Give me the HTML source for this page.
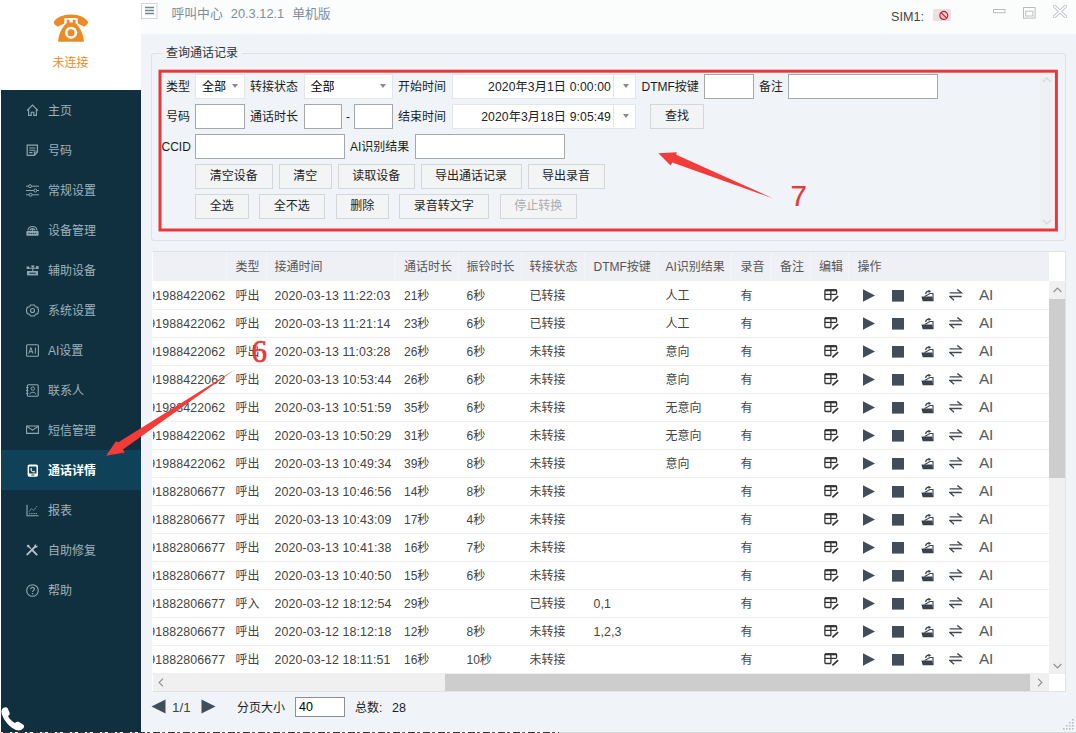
<!DOCTYPE html>
<html lang="zh-CN">
<head>
<meta charset="utf-8">
<title>呼叫中心</title>
<style>
*{box-sizing:border-box;margin:0;padding:0}
html,body{width:1076px;height:733px;overflow:hidden;background:#fff}
body{position:relative;font-family:"Liberation Sans","Noto Sans CJK SC",sans-serif;font-size:12px;color:#222;line-height:1}
.abs{position:absolute}
#logo{position:absolute;left:0;top:0;width:141px;height:90px;background:#fff}
#logo .t{position:absolute;left:0;width:141px;top:56px;text-align:center;color:#e98b2d;font-size:12px;line-height:14px}
#side{position:absolute;left:1px;top:90px;width:139.500px;height:641.500px;background:#11303f}
.si{position:absolute;left:0;width:139.500px;height:40px;color:#9db3be;font-size:12px}
.si svg{position:absolute;left:24.500px;top:13.700px}
.si span{position:absolute;left:47px;top:12.600px;line-height:16px;white-space:nowrap}
.si.sel{background:#0f4259;color:#fff;font-weight:bold}
#titlebar{position:absolute;left:141px;top:0;width:935px;height:34px;background:#fbfcfc}
#main{position:absolute;left:140.500px;top:34px;width:935.500px;height:697.500px;background:#f0f4f8}
#bottom{position:absolute;left:0;top:731.500px;width:1076px;height:1.500px;background:#fff;border-top:1px solid #d9dadb}
.lb{position:absolute;white-space:nowrap;line-height:16px;font-size:12px;color:#1c1c1c}
.inp{position:absolute;background:#fff;border:1px solid #a5a8ab;height:24.5px}
.cmb{position:absolute;background:#fff;border:1px solid #e3e5e7;height:24.200px;margin-top:-.2px}
.cmb span{position:absolute;left:6px;top:4px;line-height:16px;color:#000}
.cmb i{position:absolute;right:5.800px;top:9px;width:0;height:0;border-left:3.400px solid transparent;border-right:3.400px solid transparent;border-top:4.200px solid #8a8a8a}
.btn{position:absolute;height:24.500px;margin-top:-.5px;background:#f3f4f5;border:1px solid #d4d6d8;text-align:center;line-height:23.600px;font-size:12px;color:#222;white-space:nowrap}
.btn.dis{color:#a9abad}
#tbl{position:absolute;left:151.500px;top:251px;width:914px;height:440.500px;border:1px solid #dfe2e6;border-left-color:#fdfdfe;background:#fff;overflow:hidden}
#thead{position:absolute;left:0;top:0;width:896px;height:29.400px;background:#eff0f5}
.th{position:absolute;top:7px;line-height:16px;color:#555;white-space:nowrap}
.tr{position:absolute;left:-1px;width:897.500px;height:28px;border-bottom:1px solid #eeeeee;margin-top:-251.200px}
.td{position:absolute;top:6px;line-height:16px;color:#444;white-space:nowrap}
.td.n{letter-spacing:.1px;font-size:12.400px}
.ic{position:absolute;margin-top:-.6px}
.hs{position:absolute;top:0;width:1px;height:29px;background:#f4f5f9}
.aib{position:absolute;top:3.500px;font-size:15.4px;line-height:20px;color:#505b66;letter-spacing:-.2px}
</style>
</head>
<body>
<div id="logo">
<svg class="abs" style="left:50px;top:10px" width="42" height="36" viewBox="50 10 42 36">
<path d="M57.800 26.800C55.500 25.500 54 24 53.700 22 56 17.500 63 14.500 71 14.500 79 14.500 86 17.500 88.100 22 87.800 24 86.300 25.500 84 26.800L77.800 23.600V18.600C74 17.900 68 17.900 64.200 18.600V23.600Z" fill="#ec8b26"/>
<path d="M66.800 19.700H69.500V22.500H72.800V19.700H75.500V23C79 26 83.500 33 84 41.800H58.100C58.600 33 63 26 66.800 23Z" fill="#ec8b26"/>
<circle cx="71.100" cy="32.800" r="6.100" fill="#fff"/><circle cx="71.100" cy="32.800" r="3.500" fill="#ec8b26"/>
</svg>
<div class="t">未连接</div>
</div>
<div id="side">
<div class="si" style="top:0px"><svg width="13" height="13" viewBox="0 0 13 13"><path d="M1 6.6 6.5 1 12 6.6M2.6 5.4V11.4H5.2V8.2H7.8V11.4H10.4V5.4" fill="none" stroke="#8fa7b2" stroke-width="1.1"/></svg><span>主页</span></div>
<div class="si" style="top:40px"><svg width="13" height="13" viewBox="0 0 13 13"><path d="M1.2 1.2H11.4V8L8.4 11.4H1.2Z" fill="none" stroke="#8fa7b2" stroke-width="1.2"/><path d="M3.3 4H9.3M3.3 6.3H9.3M3.3 8.6H6.5M8.4 11.4V8H11.4" fill="none" stroke="#8fa7b2" stroke-width="1.1"/></svg><span>号码</span></div>
<div class="si" style="top:80px"><svg width="13" height="13" viewBox="0 0 13 13"><path d="M0 2.2H13M0 6.5H13M0 10.8H13" stroke="#8fa7b2" stroke-width="1"/><circle cx="4" cy="2.2" r="1.5" fill="#11303f" stroke="#8fa7b2"/><circle cx="9.4" cy="6.5" r="1.5" fill="#11303f" stroke="#8fa7b2"/><circle cx="4.6" cy="10.8" r="1.5" fill="#11303f" stroke="#8fa7b2"/></svg><span>常规设置</span></div>
<div class="si" style="top:120px"><svg width="13" height="13" viewBox="0 0 13 13"><rect x=".4" y="7" width="12.200" height="4.800" rx=".8" fill="#8fa7b2"/><path d="M1.800 6.400A4.800 4.800 0 0 1 11.200 6.400" fill="none" stroke="#8fa7b2" stroke-width="1.100"/><path d="M3.900 6.400A2.700 2.700 0 0 1 9.100 6.400" fill="none" stroke="#8fa7b2" stroke-width="1.100"/><circle cx="6.500" cy="5.800" r="1.100" fill="#8fa7b2"/><path d="M2.200 9.400H10.800" stroke="#11303f" stroke-width=".9" stroke-dasharray="1.500 .7"/></svg><span>设备管理</span></div>
<div class="si" style="top:160px"><svg width="13" height="13" viewBox="0 0 13 13"><rect x="1" y="7" width="11" height="4.4" fill="#8fa7b2"/><path d="M3.2 9.2H9.8" stroke="#11303f" stroke-width="1"/><path d="M6.8 7V4.2H2.4M6.8 4.2H11" fill="none" stroke="#8fa7b2" stroke-width="1.1"/><rect x=".6" y="2.4" width="2.6" height="2.6" fill="#8fa7b2"/><rect x="5.4" y="1.4" width="2.8" height="2.2" fill="#8fa7b2"/><rect x="10" y="2" width="2.6" height="3" fill="#8fa7b2"/></svg><span>辅助设备</span></div>
<div class="si" style="top:200px"><svg width="13" height="13" viewBox="0 0 13 13"><path d="M4.6 1 8.4 1 9.6 2.8 11.8 3.4 12.6 6.5 11.8 9.6 9.6 10.2 8.4 12 4.6 12 3.4 10.2 1.2 9.6.4 6.5 1.2 3.4 3.4 2.8Z" fill="none" stroke="#8fa7b2" stroke-width="1.1" stroke-linejoin="round"/><circle cx="6.5" cy="6.5" r="2" fill="none" stroke="#8fa7b2" stroke-width="1.1"/></svg><span>系统设置</span></div>
<div class="si" style="top:240px"><svg width="13" height="13" viewBox="0 0 13 13"><rect x=".6" y=".8" width="11.8" height="11.4" rx="1" fill="none" stroke="#8fa7b2" stroke-width="1.1"/><path d="M2.8 9.6 4.9 3.6 7 9.6M3.5 7.7H6.3M9.4 3.6V9.6" fill="none" stroke="#8fa7b2" stroke-width="1"/></svg><span>AI设置</span></div>
<div class="si" style="top:280px"><svg width="13" height="13" viewBox="0 0 13 13"><rect x="1.4" y=".8" width="10.8" height="11.4" rx="1" fill="none" stroke="#8fa7b2" stroke-width="1.1"/><circle cx="6.8" cy="4.6" r="1.7" fill="none" stroke="#8fa7b2" stroke-width="1"/><path d="M3.8 10.4C4 7.6 9.6 7.6 9.8 10.4" fill="none" stroke="#8fa7b2" stroke-width="1"/><path d="M0 3.6H2.4M0 6.5H2.4M0 9.4H2.4" stroke="#8fa7b2" stroke-width="1"/></svg><span>联系人</span></div>
<div class="si" style="top:320px"><svg width="13" height="13" viewBox="0 0 13 13"><path d="M.6 2H12.400V9.400H.6Z" fill="none" stroke="#8fa7b2" stroke-width="1.100"/><path d="M.8 2.200 6.500 6.200 12.200 2.200" fill="none" stroke="#8fa7b2" stroke-width="1.100"/></svg><span>短信管理</span></div>
<div class="si sel" style="top:360px"><svg width="13" height="13" viewBox="0 0 13 13"><rect x="1.600" y=".4" width="10.400" height="12.300" rx="1.700" fill="#fff"/><rect x="3.100" y="2.600" width="7.400" height="7" rx=".6" fill="#0f4259"/><path d="M4.400 4.400C4.400 7.200 5.800 8.500 8.600 8.500L9 7.400 7.700 6.800 7.100 7.400C6.200 7.200 5.700 6.500 5.500 5.700L6.100 5.100 5.500 3.900Z" fill="#fff"/><rect x="5.300" y="10.500" width="3" height="1" fill="#0f4259"/></svg><span>通话详情</span></div>
<div class="si" style="top:400px"><svg width="13" height="13" viewBox="0 0 13 13"><path d="M1 .8V11.8H12.6" fill="none" stroke="#8fa7b2" stroke-width="1.1"/><path d="M3 9.6H11.6M3.2 7.6 5.6 4.4 7.6 6.4 10.8 2.4" fill="none" stroke="#8fa7b2" stroke-width="1" stroke-dasharray="1.4 .8"/></svg><span>报表</span></div>
<div class="si" style="top:440px"><svg width="13" height="13" viewBox="0 0 13 13"><g transform="translate(.3 .2) scale(.88)"><path d="M1.2 11.6 10.6 2.2" stroke="#b4c3ca" stroke-width="2.2" stroke-linecap="round"/><path d="M11.8 11.8 6.8 6.8" stroke="#b4c3ca" stroke-width="2.2" stroke-linecap="round"/><path d="M1 1 5.4 5.2" stroke="#b4c3ca" stroke-width="1.4"/><path d="M.4 2.2 2.4.4 4 2.2 2.2 3.8Z" fill="#b4c3ca"/><circle cx="11" cy="2" r="1.9" fill="#b4c3ca"/><circle cx="12" cy="1" r="1.1" fill="#11303f"/></g></svg><span>自助修复</span></div>
<div class="si" style="top:480px"><svg width="13" height="13" viewBox="0 0 13 13"><circle cx="6.5" cy="6.5" r="5.8" fill="none" stroke="#8fa7b2" stroke-width="1.1"/><path d="M4.7 5.2C4.7 2.8 8.4 2.8 8.4 5 8.4 6.4 6.6 6.4 6.6 8" fill="none" stroke="#8fa7b2" stroke-width="1.1"/><circle cx="6.6" cy="9.8" r=".7" fill="#8fa7b2"/></svg><span>帮助</span></div>
<svg class="abs" style="left:-1px;top:614px" width="27" height="28" viewBox="0 704 27 28"><path d="M2 709.500C3 707.500 6 706.500 7.500 708L9.500 712.500C10 714 9.500 715 8 716 9.500 719 12 721.500 15 723 16 721.700 17.500 721.300 19 722L23 724.500C24.500 725.500 24.300 727 23.500 728 21.500 730.500 18.500 731 16 730 9.500 727 4 721 1.800 714 1.300 712 1.300 710.500 2 709.500Z" fill="#fff"/></svg>
</div>
<div id="titlebar">
<svg class="abs" style="left:0;top:3px" width="17" height="16" viewBox="0 0 17 16"><rect x=".5" y=".5" width="15.500" height="15" fill="#fff" stroke="#cfd5da"/><path d="M4 4.500H13M4 7.500H13M4 10.500H13" stroke="#6f8494" stroke-width="1.300"/></svg>
<div class="abs" style="left:30.500px;top:5px;font-size:12.800px;line-height:17px;color:#7d8f9e;white-space:pre;word-spacing:.5px">呼叫中心  20.3.12.1  单机版</div>
<div class="abs" style="left:750px;top:9px;font-size:12.600px;line-height:17px;color:#444">SIM1:</div>
<svg class="abs" style="left:792px;top:8.500px" width="18" height="12" viewBox="0 0 18 12"><rect width="18" height="12" rx="1.500" fill="#ebdfe0"/><circle cx="10.800" cy="6.400" r="4" fill="#f3c9cf" stroke="#c4203f" stroke-width="1.200"/><path d="M8 3.600 13.600 9.200" stroke="#c4203f" stroke-width="1.200"/></svg>
<svg class="abs" style="left:852px;top:8.500px" width="13" height="5" viewBox="0 0 13 5"><rect x=".5" y=".5" width="11.500" height="3.200" fill="#fff" stroke="#b9bcbf"/></svg>
<svg class="abs" style="left:881.500px;top:6.500px" width="13" height="12" viewBox="0 0 13 12"><rect x=".5" y=".5" width="11.600" height="10.600" fill="#fff" stroke="#b9bcbf"/><rect x="2.700" y="4.200" width="7.200" height="4.800" fill="#fff" stroke="#b9bcbf"/></svg>
<svg class="abs" style="left:912px;top:5px" width="14" height="13" viewBox="0 0 14 13"><path d="M1.200 1 12.800 12M12.800 1 1.200 12" stroke="#bfc2c5" stroke-width="3.200" stroke-linecap="round"/><path d="M1.200 1 12.800 12M12.800 1 1.200 12" stroke="#fff" stroke-width="1.400" stroke-linecap="round"/></svg>
</div>
<div id="main"></div>

<!-- group box -->
<div class="abs" style="left:151px;top:53px;width:914.500px;height:187.500px;border:1px solid #dde1e5;border-radius:3px"></div>
<div class="lb" style="left:162px;top:45px;padding:0 4px;background:#f0f4f8;color:#333">查询通话记录</div>
<div class="abs" style="left:1040px;top:73px;width:12.500px;height:156px;background:#eef1f3"></div>
<svg class="abs" style="left:1042px;top:77px" width="10" height="6" viewBox="0 0 10 6"><path d="M1 5 5 1 9 5" fill="none" stroke="#d5d8db" stroke-width="1.200"/></svg>
<svg class="abs" style="left:1042px;top:219px" width="10" height="6" viewBox="0 0 10 6"><path d="M1 1 5 5 9 1" fill="none" stroke="#d5d8db" stroke-width="1.200"/></svg>

<!-- row 1 -->
<div class="lb" style="left:166px;top:79px">类型</div>
<div class="cmb" style="left:195px;top:74.500px;width:50px"><span>全部</span><i></i></div>
<div class="lb" style="left:250px;top:79px">转接状态</div>
<div class="cmb" style="left:303.500px;top:74.500px;width:89px"><span>全部</span><i></i></div>
<div class="lb" style="left:398px;top:79px">开始时间</div>
<div class="cmb" style="left:451.500px;top:74.500px;width:184px"><span style="left:auto;right:23.500px;color:#222;font-size:12.200px;letter-spacing:.1px">2020年3月1日 0:00:00</span><b style="position:absolute;right:20.500px;top:0;width:1px;height:22px;background:#e3e5e7"></b><i></i></div>
<div class="lb" style="left:641.500px;top:79px">DTMF按键</div>
<div class="inp" style="left:704px;top:74px;width:49.500px"></div>
<div class="lb" style="left:759px;top:79px">备注</div>
<div class="inp" style="left:788px;top:74px;width:149.500px"></div>
<!-- row 2 -->
<div class="lb" style="left:166px;top:109px">号码</div>
<div class="inp" style="left:195px;top:104px;width:50px"></div>
<div class="lb" style="left:250px;top:109px">通话时长</div>
<div class="inp" style="left:303.500px;top:104px;width:38.500px"></div>
<div class="lb" style="left:346px;top:109px">-</div>
<div class="inp" style="left:354px;top:104px;width:38.500px"></div>
<div class="lb" style="left:398px;top:109px">结束时间</div>
<div class="cmb" style="left:451.500px;top:104.500px;width:184px"><span style="left:auto;right:23.500px;color:#222;font-size:12.200px;letter-spacing:.1px">2020年3月18日 9:05:49</span><b style="position:absolute;right:20.500px;top:0;width:1px;height:22px;background:#e3e5e7"></b><i></i></div>
<div class="btn" style="left:650px;top:104.500px;width:54px">查找</div>
<!-- row 3 -->
<div class="lb" style="left:161.500px;top:139px">CCID</div>
<div class="inp" style="left:195px;top:134px;width:149.500px"></div>
<div class="lb" style="left:350px;top:139px">AI识别结果</div>
<div class="inp" style="left:415px;top:134px;width:150px"></div>
<!-- row 4 -->
<div class="btn" style="left:195px;top:164.500px;width:77.500px">清空设备</div>
<div class="btn" style="left:278.500px;top:164.500px;width:53.500px">清空</div>
<div class="btn" style="left:337.500px;top:164.500px;width:77.500px">读取设备</div>
<div class="btn" style="left:420.500px;top:164.500px;width:101px">导出通话记录</div>
<div class="btn" style="left:527.500px;top:164.500px;width:77px">导出录音</div>
<!-- row 5 -->
<div class="btn" style="left:195px;top:194.500px;width:53.500px">全选</div>
<div class="btn" style="left:259px;top:194.500px;width:65.500px">全不选</div>
<div class="btn" style="left:335.500px;top:194.500px;width:53.500px">删除</div>
<div class="btn" style="left:399px;top:194.500px;width:89.500px">录音转文字</div>
<div class="btn dis" style="left:499.500px;top:194.500px;width:77.500px">停止转换</div>

<!-- table -->
<div id="tbl">
<div id="thead">
<b class="hs" style="left:73.5px"></b><b class="hs" style="left:113.0px"></b><b class="hs" style="left:242.5px"></b><b class="hs" style="left:305.0px"></b><b class="hs" style="left:368.0px"></b><b class="hs" style="left:431.5px"></b><b class="hs" style="left:504.0px"></b><b class="hs" style="left:578.5px"></b><b class="hs" style="left:618.0px"></b><b class="hs" style="left:657.0px"></b><b class="hs" style="left:695.5px"></b>
<span class="th" style="left:83px">类型</span>
<span class="th" style="left:122px">接通时间</span>
<span class="th" style="left:251.500px">通话时长</span>
<span class="th" style="left:314px">振铃时长</span>
<span class="th" style="left:377px">转接状态</span>
<span class="th" style="left:441px">DTMF按键</span>
<span class="th" style="left:513px">AI识别结果</span>
<span class="th" style="left:588px">录音</span>
<span class="th" style="left:627.500px">备注</span>
<span class="th" style="left:666.500px">编辑</span>
<span class="th" style="left:705px">操作</span>
</div>
<div class="tr" style="top:281px">
<span class="td n" style="left:-3.1999999999999886px">91988422062</span>
<span class="td" style="left:84.0px">呼出</span>
<span class="td n" style="left:123.0px">2020-03-13 11:22:03</span>
<span class="td" style="left:252.5px">21秒</span>
<span class="td" style="left:315.0px">6秒</span>
<span class="td" style="left:378.0px">已转接</span>
<span class="td" style="left:514.0px">人工</span>
<span class="td" style="left:589.0px">有</span>
<svg class="ic" style="left:672.8px;top:7.7px" width="15" height="13" viewBox="0 0 15 13"><path d="M12.600 4.800V1.800Q12.600 .9 11.700 .9H1.800Q.9 .9 .9 1.800V9.600Q.9 10.500 1.800 10.500H6.800M.9 5.400H12.600M6.900 1V10.500" fill="none" stroke="#333" stroke-width="1.300"/><path d="M1 1.300H12.500" stroke="#333" stroke-width="2"/><path d="M8.400 12.400 14.100 7.200" stroke="#333" stroke-width="1.700" fill="none"/></svg>
<svg class="ic" style="left:711.5px;top:7.8px" width="12" height="13" viewBox="0 0 12 13"><path d="M0 .3 12 6.5 0 12.7Z" fill="#414e5a"/></svg>
<svg class="ic" style="left:740.7px;top:8.3px" width="12" height="12" viewBox="0 0 12 12"><rect width="12" height="11.6" fill="#414e5a"/></svg>
<svg class="ic" style="left:769.1px;top:8.4px" width="13" height="12" viewBox="0 0 13 12"><path d="M.4 6.600H11.200L12.300 11.300H1.700Z" fill="#3a434c"/><path d="M3.600 6.400 9 3.500H12V11" fill="none" stroke="#3a434c" stroke-width="1.100"/><path d="M4.600 3.800C5 2 6.200 1.200 8 1.200" fill="none" stroke="#3a434c" stroke-width="1.300"/><path d="M7.400 -.4 10.200 1.200 7.600 3Z" fill="#3a434c"/></svg>
<svg class="ic" style="left:797.8px;top:8.2px" width="14" height="12" viewBox="0 0 14 12"><path d="M.6 3.800H12.500L8.300 .4M12.700 7.500H.8L5 11.200" fill="none" stroke="#414851" stroke-width="1.300"/></svg>
<span class="aib" style="left:827.5px">AI</span>
</div>
<div class="tr" style="top:309px">
<span class="td n" style="left:-3.1999999999999886px">91988422062</span>
<span class="td" style="left:84.0px">呼出</span>
<span class="td n" style="left:123.0px">2020-03-13 11:21:14</span>
<span class="td" style="left:252.5px">23秒</span>
<span class="td" style="left:315.0px">6秒</span>
<span class="td" style="left:378.0px">已转接</span>
<span class="td" style="left:514.0px">人工</span>
<span class="td" style="left:589.0px">有</span>
<svg class="ic" style="left:672.8px;top:7.7px" width="15" height="13" viewBox="0 0 15 13"><path d="M12.600 4.800V1.800Q12.600 .9 11.700 .9H1.800Q.9 .9 .9 1.800V9.600Q.9 10.500 1.800 10.500H6.800M.9 5.400H12.600M6.900 1V10.500" fill="none" stroke="#333" stroke-width="1.300"/><path d="M1 1.300H12.500" stroke="#333" stroke-width="2"/><path d="M8.400 12.400 14.100 7.200" stroke="#333" stroke-width="1.700" fill="none"/></svg>
<svg class="ic" style="left:711.5px;top:7.8px" width="12" height="13" viewBox="0 0 12 13"><path d="M0 .3 12 6.5 0 12.7Z" fill="#414e5a"/></svg>
<svg class="ic" style="left:740.7px;top:8.3px" width="12" height="12" viewBox="0 0 12 12"><rect width="12" height="11.6" fill="#414e5a"/></svg>
<svg class="ic" style="left:769.1px;top:8.4px" width="13" height="12" viewBox="0 0 13 12"><path d="M.4 6.600H11.200L12.300 11.300H1.700Z" fill="#3a434c"/><path d="M3.600 6.400 9 3.500H12V11" fill="none" stroke="#3a434c" stroke-width="1.100"/><path d="M4.600 3.800C5 2 6.200 1.200 8 1.200" fill="none" stroke="#3a434c" stroke-width="1.300"/><path d="M7.400 -.4 10.200 1.200 7.600 3Z" fill="#3a434c"/></svg>
<svg class="ic" style="left:797.8px;top:8.2px" width="14" height="12" viewBox="0 0 14 12"><path d="M.6 3.800H12.500L8.300 .4M12.700 7.500H.8L5 11.200" fill="none" stroke="#414851" stroke-width="1.300"/></svg>
<span class="aib" style="left:827.5px">AI</span>
</div>
<div class="tr" style="top:337px">
<span class="td n" style="left:-3.1999999999999886px">91988422062</span>
<span class="td" style="left:84.0px">呼出</span>
<span class="td n" style="left:123.0px">2020-03-13 11:03:28</span>
<span class="td" style="left:252.5px">26秒</span>
<span class="td" style="left:315.0px">6秒</span>
<span class="td" style="left:378.0px">未转接</span>
<span class="td" style="left:514.0px">意向</span>
<span class="td" style="left:589.0px">有</span>
<svg class="ic" style="left:672.8px;top:7.7px" width="15" height="13" viewBox="0 0 15 13"><path d="M12.600 4.800V1.800Q12.600 .9 11.700 .9H1.800Q.9 .9 .9 1.800V9.600Q.9 10.500 1.800 10.500H6.800M.9 5.400H12.600M6.900 1V10.500" fill="none" stroke="#333" stroke-width="1.300"/><path d="M1 1.300H12.500" stroke="#333" stroke-width="2"/><path d="M8.400 12.400 14.100 7.200" stroke="#333" stroke-width="1.700" fill="none"/></svg>
<svg class="ic" style="left:711.5px;top:7.8px" width="12" height="13" viewBox="0 0 12 13"><path d="M0 .3 12 6.5 0 12.7Z" fill="#414e5a"/></svg>
<svg class="ic" style="left:740.7px;top:8.3px" width="12" height="12" viewBox="0 0 12 12"><rect width="12" height="11.6" fill="#414e5a"/></svg>
<svg class="ic" style="left:769.1px;top:8.4px" width="13" height="12" viewBox="0 0 13 12"><path d="M.4 6.600H11.200L12.300 11.300H1.700Z" fill="#3a434c"/><path d="M3.600 6.400 9 3.500H12V11" fill="none" stroke="#3a434c" stroke-width="1.100"/><path d="M4.600 3.800C5 2 6.200 1.200 8 1.200" fill="none" stroke="#3a434c" stroke-width="1.300"/><path d="M7.400 -.4 10.200 1.200 7.600 3Z" fill="#3a434c"/></svg>
<svg class="ic" style="left:797.8px;top:8.2px" width="14" height="12" viewBox="0 0 14 12"><path d="M.6 3.800H12.500L8.300 .4M12.700 7.500H.8L5 11.200" fill="none" stroke="#414851" stroke-width="1.300"/></svg>
<span class="aib" style="left:827.5px">AI</span>
</div>
<div class="tr" style="top:365px">
<span class="td n" style="left:-3.1999999999999886px">91988422062</span>
<span class="td" style="left:84.0px">呼出</span>
<span class="td n" style="left:123.0px">2020-03-13 10:53:44</span>
<span class="td" style="left:252.5px">26秒</span>
<span class="td" style="left:315.0px">6秒</span>
<span class="td" style="left:378.0px">未转接</span>
<span class="td" style="left:514.0px">意向</span>
<span class="td" style="left:589.0px">有</span>
<svg class="ic" style="left:672.8px;top:7.7px" width="15" height="13" viewBox="0 0 15 13"><path d="M12.600 4.800V1.800Q12.600 .9 11.700 .9H1.800Q.9 .9 .9 1.800V9.600Q.9 10.500 1.800 10.500H6.800M.9 5.400H12.600M6.900 1V10.500" fill="none" stroke="#333" stroke-width="1.300"/><path d="M1 1.300H12.500" stroke="#333" stroke-width="2"/><path d="M8.400 12.400 14.100 7.200" stroke="#333" stroke-width="1.700" fill="none"/></svg>
<svg class="ic" style="left:711.5px;top:7.8px" width="12" height="13" viewBox="0 0 12 13"><path d="M0 .3 12 6.5 0 12.7Z" fill="#414e5a"/></svg>
<svg class="ic" style="left:740.7px;top:8.3px" width="12" height="12" viewBox="0 0 12 12"><rect width="12" height="11.6" fill="#414e5a"/></svg>
<svg class="ic" style="left:769.1px;top:8.4px" width="13" height="12" viewBox="0 0 13 12"><path d="M.4 6.600H11.200L12.300 11.300H1.700Z" fill="#3a434c"/><path d="M3.600 6.400 9 3.500H12V11" fill="none" stroke="#3a434c" stroke-width="1.100"/><path d="M4.600 3.800C5 2 6.200 1.200 8 1.200" fill="none" stroke="#3a434c" stroke-width="1.300"/><path d="M7.400 -.4 10.200 1.200 7.600 3Z" fill="#3a434c"/></svg>
<svg class="ic" style="left:797.8px;top:8.2px" width="14" height="12" viewBox="0 0 14 12"><path d="M.6 3.800H12.500L8.300 .4M12.700 7.500H.8L5 11.200" fill="none" stroke="#414851" stroke-width="1.300"/></svg>
<span class="aib" style="left:827.5px">AI</span>
</div>
<div class="tr" style="top:393px">
<span class="td n" style="left:-3.1999999999999886px">91988422062</span>
<span class="td" style="left:84.0px">呼出</span>
<span class="td n" style="left:123.0px">2020-03-13 10:51:59</span>
<span class="td" style="left:252.5px">35秒</span>
<span class="td" style="left:315.0px">6秒</span>
<span class="td" style="left:378.0px">未转接</span>
<span class="td" style="left:514.0px">无意向</span>
<span class="td" style="left:589.0px">有</span>
<svg class="ic" style="left:672.8px;top:7.7px" width="15" height="13" viewBox="0 0 15 13"><path d="M12.600 4.800V1.800Q12.600 .9 11.700 .9H1.800Q.9 .9 .9 1.800V9.600Q.9 10.500 1.800 10.500H6.800M.9 5.400H12.600M6.900 1V10.500" fill="none" stroke="#333" stroke-width="1.300"/><path d="M1 1.300H12.500" stroke="#333" stroke-width="2"/><path d="M8.400 12.400 14.100 7.200" stroke="#333" stroke-width="1.700" fill="none"/></svg>
<svg class="ic" style="left:711.5px;top:7.8px" width="12" height="13" viewBox="0 0 12 13"><path d="M0 .3 12 6.5 0 12.7Z" fill="#414e5a"/></svg>
<svg class="ic" style="left:740.7px;top:8.3px" width="12" height="12" viewBox="0 0 12 12"><rect width="12" height="11.6" fill="#414e5a"/></svg>
<svg class="ic" style="left:769.1px;top:8.4px" width="13" height="12" viewBox="0 0 13 12"><path d="M.4 6.600H11.200L12.300 11.300H1.700Z" fill="#3a434c"/><path d="M3.600 6.400 9 3.500H12V11" fill="none" stroke="#3a434c" stroke-width="1.100"/><path d="M4.600 3.800C5 2 6.200 1.200 8 1.200" fill="none" stroke="#3a434c" stroke-width="1.300"/><path d="M7.400 -.4 10.200 1.200 7.600 3Z" fill="#3a434c"/></svg>
<svg class="ic" style="left:797.8px;top:8.2px" width="14" height="12" viewBox="0 0 14 12"><path d="M.6 3.800H12.500L8.300 .4M12.700 7.500H.8L5 11.200" fill="none" stroke="#414851" stroke-width="1.300"/></svg>
<span class="aib" style="left:827.5px">AI</span>
</div>
<div class="tr" style="top:421px">
<span class="td n" style="left:-3.1999999999999886px">91988422062</span>
<span class="td" style="left:84.0px">呼出</span>
<span class="td n" style="left:123.0px">2020-03-13 10:50:29</span>
<span class="td" style="left:252.5px">31秒</span>
<span class="td" style="left:315.0px">6秒</span>
<span class="td" style="left:378.0px">未转接</span>
<span class="td" style="left:514.0px">无意向</span>
<span class="td" style="left:589.0px">有</span>
<svg class="ic" style="left:672.8px;top:7.7px" width="15" height="13" viewBox="0 0 15 13"><path d="M12.600 4.800V1.800Q12.600 .9 11.700 .9H1.800Q.9 .9 .9 1.800V9.600Q.9 10.500 1.800 10.500H6.800M.9 5.400H12.600M6.900 1V10.500" fill="none" stroke="#333" stroke-width="1.300"/><path d="M1 1.300H12.500" stroke="#333" stroke-width="2"/><path d="M8.400 12.400 14.100 7.200" stroke="#333" stroke-width="1.700" fill="none"/></svg>
<svg class="ic" style="left:711.5px;top:7.8px" width="12" height="13" viewBox="0 0 12 13"><path d="M0 .3 12 6.5 0 12.7Z" fill="#414e5a"/></svg>
<svg class="ic" style="left:740.7px;top:8.3px" width="12" height="12" viewBox="0 0 12 12"><rect width="12" height="11.6" fill="#414e5a"/></svg>
<svg class="ic" style="left:769.1px;top:8.4px" width="13" height="12" viewBox="0 0 13 12"><path d="M.4 6.600H11.200L12.300 11.300H1.700Z" fill="#3a434c"/><path d="M3.600 6.400 9 3.500H12V11" fill="none" stroke="#3a434c" stroke-width="1.100"/><path d="M4.600 3.800C5 2 6.200 1.200 8 1.200" fill="none" stroke="#3a434c" stroke-width="1.300"/><path d="M7.400 -.4 10.200 1.200 7.600 3Z" fill="#3a434c"/></svg>
<svg class="ic" style="left:797.8px;top:8.2px" width="14" height="12" viewBox="0 0 14 12"><path d="M.6 3.800H12.500L8.300 .4M12.700 7.500H.8L5 11.200" fill="none" stroke="#414851" stroke-width="1.300"/></svg>
<span class="aib" style="left:827.5px">AI</span>
</div>
<div class="tr" style="top:449px">
<span class="td n" style="left:-3.1999999999999886px">91988422062</span>
<span class="td" style="left:84.0px">呼出</span>
<span class="td n" style="left:123.0px">2020-03-13 10:49:34</span>
<span class="td" style="left:252.5px">39秒</span>
<span class="td" style="left:315.0px">8秒</span>
<span class="td" style="left:378.0px">未转接</span>
<span class="td" style="left:514.0px">意向</span>
<span class="td" style="left:589.0px">有</span>
<svg class="ic" style="left:672.8px;top:7.7px" width="15" height="13" viewBox="0 0 15 13"><path d="M12.600 4.800V1.800Q12.600 .9 11.700 .9H1.800Q.9 .9 .9 1.800V9.600Q.9 10.500 1.800 10.500H6.800M.9 5.400H12.600M6.900 1V10.500" fill="none" stroke="#333" stroke-width="1.300"/><path d="M1 1.300H12.500" stroke="#333" stroke-width="2"/><path d="M8.400 12.400 14.100 7.200" stroke="#333" stroke-width="1.700" fill="none"/></svg>
<svg class="ic" style="left:711.5px;top:7.8px" width="12" height="13" viewBox="0 0 12 13"><path d="M0 .3 12 6.5 0 12.7Z" fill="#414e5a"/></svg>
<svg class="ic" style="left:740.7px;top:8.3px" width="12" height="12" viewBox="0 0 12 12"><rect width="12" height="11.6" fill="#414e5a"/></svg>
<svg class="ic" style="left:769.1px;top:8.4px" width="13" height="12" viewBox="0 0 13 12"><path d="M.4 6.600H11.200L12.300 11.300H1.700Z" fill="#3a434c"/><path d="M3.600 6.400 9 3.500H12V11" fill="none" stroke="#3a434c" stroke-width="1.100"/><path d="M4.600 3.800C5 2 6.200 1.200 8 1.200" fill="none" stroke="#3a434c" stroke-width="1.300"/><path d="M7.400 -.4 10.200 1.200 7.600 3Z" fill="#3a434c"/></svg>
<svg class="ic" style="left:797.8px;top:8.2px" width="14" height="12" viewBox="0 0 14 12"><path d="M.6 3.800H12.500L8.300 .4M12.700 7.500H.8L5 11.200" fill="none" stroke="#414851" stroke-width="1.300"/></svg>
<span class="aib" style="left:827.5px">AI</span>
</div>
<div class="tr" style="top:477px">
<span class="td n" style="left:-3.1999999999999886px">91882806677</span>
<span class="td" style="left:84.0px">呼出</span>
<span class="td n" style="left:123.0px">2020-03-13 10:46:56</span>
<span class="td" style="left:252.5px">14秒</span>
<span class="td" style="left:315.0px">8秒</span>
<span class="td" style="left:378.0px">未转接</span>
<span class="td" style="left:589.0px">有</span>
<svg class="ic" style="left:672.8px;top:7.7px" width="15" height="13" viewBox="0 0 15 13"><path d="M12.600 4.800V1.800Q12.600 .9 11.700 .9H1.800Q.9 .9 .9 1.800V9.600Q.9 10.500 1.800 10.500H6.800M.9 5.400H12.600M6.900 1V10.500" fill="none" stroke="#333" stroke-width="1.300"/><path d="M1 1.300H12.500" stroke="#333" stroke-width="2"/><path d="M8.400 12.400 14.100 7.200" stroke="#333" stroke-width="1.700" fill="none"/></svg>
<svg class="ic" style="left:711.5px;top:7.8px" width="12" height="13" viewBox="0 0 12 13"><path d="M0 .3 12 6.5 0 12.7Z" fill="#414e5a"/></svg>
<svg class="ic" style="left:740.7px;top:8.3px" width="12" height="12" viewBox="0 0 12 12"><rect width="12" height="11.6" fill="#414e5a"/></svg>
<svg class="ic" style="left:769.1px;top:8.4px" width="13" height="12" viewBox="0 0 13 12"><path d="M.4 6.600H11.200L12.300 11.300H1.700Z" fill="#3a434c"/><path d="M3.600 6.400 9 3.500H12V11" fill="none" stroke="#3a434c" stroke-width="1.100"/><path d="M4.600 3.800C5 2 6.200 1.200 8 1.200" fill="none" stroke="#3a434c" stroke-width="1.300"/><path d="M7.400 -.4 10.200 1.200 7.600 3Z" fill="#3a434c"/></svg>
<svg class="ic" style="left:797.8px;top:8.2px" width="14" height="12" viewBox="0 0 14 12"><path d="M.6 3.800H12.500L8.300 .4M12.700 7.500H.8L5 11.200" fill="none" stroke="#414851" stroke-width="1.300"/></svg>
<span class="aib" style="left:827.5px">AI</span>
</div>
<div class="tr" style="top:505px">
<span class="td n" style="left:-3.1999999999999886px">91882806677</span>
<span class="td" style="left:84.0px">呼出</span>
<span class="td n" style="left:123.0px">2020-03-13 10:43:09</span>
<span class="td" style="left:252.5px">17秒</span>
<span class="td" style="left:315.0px">4秒</span>
<span class="td" style="left:378.0px">未转接</span>
<span class="td" style="left:589.0px">有</span>
<svg class="ic" style="left:672.8px;top:7.7px" width="15" height="13" viewBox="0 0 15 13"><path d="M12.600 4.800V1.800Q12.600 .9 11.700 .9H1.800Q.9 .9 .9 1.800V9.600Q.9 10.500 1.800 10.500H6.800M.9 5.400H12.600M6.900 1V10.500" fill="none" stroke="#333" stroke-width="1.300"/><path d="M1 1.300H12.500" stroke="#333" stroke-width="2"/><path d="M8.400 12.400 14.100 7.200" stroke="#333" stroke-width="1.700" fill="none"/></svg>
<svg class="ic" style="left:711.5px;top:7.8px" width="12" height="13" viewBox="0 0 12 13"><path d="M0 .3 12 6.5 0 12.7Z" fill="#414e5a"/></svg>
<svg class="ic" style="left:740.7px;top:8.3px" width="12" height="12" viewBox="0 0 12 12"><rect width="12" height="11.6" fill="#414e5a"/></svg>
<svg class="ic" style="left:769.1px;top:8.4px" width="13" height="12" viewBox="0 0 13 12"><path d="M.4 6.600H11.200L12.300 11.300H1.700Z" fill="#3a434c"/><path d="M3.600 6.400 9 3.500H12V11" fill="none" stroke="#3a434c" stroke-width="1.100"/><path d="M4.600 3.800C5 2 6.200 1.200 8 1.200" fill="none" stroke="#3a434c" stroke-width="1.300"/><path d="M7.400 -.4 10.200 1.200 7.600 3Z" fill="#3a434c"/></svg>
<svg class="ic" style="left:797.8px;top:8.2px" width="14" height="12" viewBox="0 0 14 12"><path d="M.6 3.800H12.500L8.300 .4M12.700 7.500H.8L5 11.200" fill="none" stroke="#414851" stroke-width="1.300"/></svg>
<span class="aib" style="left:827.5px">AI</span>
</div>
<div class="tr" style="top:533px">
<span class="td n" style="left:-3.1999999999999886px">91882806677</span>
<span class="td" style="left:84.0px">呼出</span>
<span class="td n" style="left:123.0px">2020-03-13 10:41:38</span>
<span class="td" style="left:252.5px">16秒</span>
<span class="td" style="left:315.0px">7秒</span>
<span class="td" style="left:378.0px">未转接</span>
<span class="td" style="left:589.0px">有</span>
<svg class="ic" style="left:672.8px;top:7.7px" width="15" height="13" viewBox="0 0 15 13"><path d="M12.600 4.800V1.800Q12.600 .9 11.700 .9H1.800Q.9 .9 .9 1.800V9.600Q.9 10.500 1.800 10.500H6.800M.9 5.400H12.600M6.900 1V10.500" fill="none" stroke="#333" stroke-width="1.300"/><path d="M1 1.300H12.500" stroke="#333" stroke-width="2"/><path d="M8.400 12.400 14.100 7.200" stroke="#333" stroke-width="1.700" fill="none"/></svg>
<svg class="ic" style="left:711.5px;top:7.8px" width="12" height="13" viewBox="0 0 12 13"><path d="M0 .3 12 6.5 0 12.7Z" fill="#414e5a"/></svg>
<svg class="ic" style="left:740.7px;top:8.3px" width="12" height="12" viewBox="0 0 12 12"><rect width="12" height="11.6" fill="#414e5a"/></svg>
<svg class="ic" style="left:769.1px;top:8.4px" width="13" height="12" viewBox="0 0 13 12"><path d="M.4 6.600H11.200L12.300 11.300H1.700Z" fill="#3a434c"/><path d="M3.600 6.400 9 3.500H12V11" fill="none" stroke="#3a434c" stroke-width="1.100"/><path d="M4.600 3.800C5 2 6.200 1.200 8 1.200" fill="none" stroke="#3a434c" stroke-width="1.300"/><path d="M7.400 -.4 10.200 1.200 7.600 3Z" fill="#3a434c"/></svg>
<svg class="ic" style="left:797.8px;top:8.2px" width="14" height="12" viewBox="0 0 14 12"><path d="M.6 3.800H12.500L8.300 .4M12.700 7.500H.8L5 11.200" fill="none" stroke="#414851" stroke-width="1.300"/></svg>
<span class="aib" style="left:827.5px">AI</span>
</div>
<div class="tr" style="top:561px">
<span class="td n" style="left:-3.1999999999999886px">91882806677</span>
<span class="td" style="left:84.0px">呼出</span>
<span class="td n" style="left:123.0px">2020-03-13 10:40:50</span>
<span class="td" style="left:252.5px">15秒</span>
<span class="td" style="left:315.0px">6秒</span>
<span class="td" style="left:378.0px">未转接</span>
<span class="td" style="left:589.0px">有</span>
<svg class="ic" style="left:672.8px;top:7.7px" width="15" height="13" viewBox="0 0 15 13"><path d="M12.600 4.800V1.800Q12.600 .9 11.700 .9H1.800Q.9 .9 .9 1.800V9.600Q.9 10.500 1.800 10.500H6.800M.9 5.400H12.600M6.900 1V10.500" fill="none" stroke="#333" stroke-width="1.300"/><path d="M1 1.300H12.500" stroke="#333" stroke-width="2"/><path d="M8.400 12.400 14.100 7.200" stroke="#333" stroke-width="1.700" fill="none"/></svg>
<svg class="ic" style="left:711.5px;top:7.8px" width="12" height="13" viewBox="0 0 12 13"><path d="M0 .3 12 6.5 0 12.7Z" fill="#414e5a"/></svg>
<svg class="ic" style="left:740.7px;top:8.3px" width="12" height="12" viewBox="0 0 12 12"><rect width="12" height="11.6" fill="#414e5a"/></svg>
<svg class="ic" style="left:769.1px;top:8.4px" width="13" height="12" viewBox="0 0 13 12"><path d="M.4 6.600H11.200L12.300 11.300H1.700Z" fill="#3a434c"/><path d="M3.600 6.400 9 3.500H12V11" fill="none" stroke="#3a434c" stroke-width="1.100"/><path d="M4.600 3.800C5 2 6.200 1.200 8 1.200" fill="none" stroke="#3a434c" stroke-width="1.300"/><path d="M7.400 -.4 10.200 1.200 7.600 3Z" fill="#3a434c"/></svg>
<svg class="ic" style="left:797.8px;top:8.2px" width="14" height="12" viewBox="0 0 14 12"><path d="M.6 3.800H12.500L8.300 .4M12.700 7.500H.8L5 11.200" fill="none" stroke="#414851" stroke-width="1.300"/></svg>
<span class="aib" style="left:827.5px">AI</span>
</div>
<div class="tr" style="top:589px">
<span class="td n" style="left:-3.1999999999999886px">91882806677</span>
<span class="td" style="left:84.0px">呼入</span>
<span class="td n" style="left:123.0px">2020-03-12 18:12:54</span>
<span class="td" style="left:252.5px">29秒</span>
<span class="td" style="left:378.0px">已转接</span>
<span class="td n" style="left:442.0px">0,1</span>
<span class="td" style="left:589.0px">有</span>
<svg class="ic" style="left:672.8px;top:7.7px" width="15" height="13" viewBox="0 0 15 13"><path d="M12.600 4.800V1.800Q12.600 .9 11.700 .9H1.800Q.9 .9 .9 1.800V9.600Q.9 10.500 1.800 10.500H6.800M.9 5.400H12.600M6.900 1V10.500" fill="none" stroke="#333" stroke-width="1.300"/><path d="M1 1.300H12.500" stroke="#333" stroke-width="2"/><path d="M8.400 12.400 14.100 7.200" stroke="#333" stroke-width="1.700" fill="none"/></svg>
<svg class="ic" style="left:711.5px;top:7.8px" width="12" height="13" viewBox="0 0 12 13"><path d="M0 .3 12 6.5 0 12.7Z" fill="#414e5a"/></svg>
<svg class="ic" style="left:740.7px;top:8.3px" width="12" height="12" viewBox="0 0 12 12"><rect width="12" height="11.6" fill="#414e5a"/></svg>
<svg class="ic" style="left:769.1px;top:8.4px" width="13" height="12" viewBox="0 0 13 12"><path d="M.4 6.600H11.200L12.300 11.300H1.700Z" fill="#3a434c"/><path d="M3.600 6.400 9 3.500H12V11" fill="none" stroke="#3a434c" stroke-width="1.100"/><path d="M4.600 3.800C5 2 6.200 1.200 8 1.200" fill="none" stroke="#3a434c" stroke-width="1.300"/><path d="M7.400 -.4 10.200 1.200 7.600 3Z" fill="#3a434c"/></svg>
<svg class="ic" style="left:797.8px;top:8.2px" width="14" height="12" viewBox="0 0 14 12"><path d="M.6 3.800H12.500L8.300 .4M12.700 7.500H.8L5 11.200" fill="none" stroke="#414851" stroke-width="1.300"/></svg>
<span class="aib" style="left:827.5px">AI</span>
</div>
<div class="tr" style="top:617px">
<span class="td n" style="left:-3.1999999999999886px">91882806677</span>
<span class="td" style="left:84.0px">呼出</span>
<span class="td n" style="left:123.0px">2020-03-12 18:12:18</span>
<span class="td" style="left:252.5px">12秒</span>
<span class="td" style="left:315.0px">8秒</span>
<span class="td" style="left:378.0px">未转接</span>
<span class="td n" style="left:442.0px">1,2,3</span>
<span class="td" style="left:589.0px">有</span>
<svg class="ic" style="left:672.8px;top:7.7px" width="15" height="13" viewBox="0 0 15 13"><path d="M12.600 4.800V1.800Q12.600 .9 11.700 .9H1.800Q.9 .9 .9 1.800V9.600Q.9 10.500 1.800 10.500H6.800M.9 5.400H12.600M6.900 1V10.500" fill="none" stroke="#333" stroke-width="1.300"/><path d="M1 1.300H12.500" stroke="#333" stroke-width="2"/><path d="M8.400 12.400 14.100 7.200" stroke="#333" stroke-width="1.700" fill="none"/></svg>
<svg class="ic" style="left:711.5px;top:7.8px" width="12" height="13" viewBox="0 0 12 13"><path d="M0 .3 12 6.5 0 12.7Z" fill="#414e5a"/></svg>
<svg class="ic" style="left:740.7px;top:8.3px" width="12" height="12" viewBox="0 0 12 12"><rect width="12" height="11.6" fill="#414e5a"/></svg>
<svg class="ic" style="left:769.1px;top:8.4px" width="13" height="12" viewBox="0 0 13 12"><path d="M.4 6.600H11.200L12.300 11.300H1.700Z" fill="#3a434c"/><path d="M3.600 6.400 9 3.500H12V11" fill="none" stroke="#3a434c" stroke-width="1.100"/><path d="M4.600 3.800C5 2 6.200 1.200 8 1.200" fill="none" stroke="#3a434c" stroke-width="1.300"/><path d="M7.400 -.4 10.200 1.200 7.600 3Z" fill="#3a434c"/></svg>
<svg class="ic" style="left:797.8px;top:8.2px" width="14" height="12" viewBox="0 0 14 12"><path d="M.6 3.800H12.500L8.300 .4M12.700 7.500H.8L5 11.200" fill="none" stroke="#414851" stroke-width="1.300"/></svg>
<span class="aib" style="left:827.5px">AI</span>
</div>
<div class="tr" style="top:645px">
<span class="td n" style="left:-3.1999999999999886px">91882806677</span>
<span class="td" style="left:84.0px">呼出</span>
<span class="td n" style="left:123.0px">2020-03-12 18:11:51</span>
<span class="td" style="left:252.5px">16秒</span>
<span class="td" style="left:315.0px">10秒</span>
<span class="td" style="left:378.0px">未转接</span>
<span class="td" style="left:589.0px">有</span>
<svg class="ic" style="left:672.8px;top:7.7px" width="15" height="13" viewBox="0 0 15 13"><path d="M12.600 4.800V1.800Q12.600 .9 11.700 .9H1.800Q.9 .9 .9 1.800V9.600Q.9 10.500 1.800 10.500H6.800M.9 5.400H12.600M6.900 1V10.500" fill="none" stroke="#333" stroke-width="1.300"/><path d="M1 1.300H12.500" stroke="#333" stroke-width="2"/><path d="M8.400 12.400 14.100 7.200" stroke="#333" stroke-width="1.700" fill="none"/></svg>
<svg class="ic" style="left:711.5px;top:7.8px" width="12" height="13" viewBox="0 0 12 13"><path d="M0 .3 12 6.5 0 12.7Z" fill="#414e5a"/></svg>
<svg class="ic" style="left:740.7px;top:8.3px" width="12" height="12" viewBox="0 0 12 12"><rect width="12" height="11.6" fill="#414e5a"/></svg>
<svg class="ic" style="left:769.1px;top:8.4px" width="13" height="12" viewBox="0 0 13 12"><path d="M.4 6.600H11.200L12.300 11.300H1.700Z" fill="#3a434c"/><path d="M3.600 6.400 9 3.500H12V11" fill="none" stroke="#3a434c" stroke-width="1.100"/><path d="M4.600 3.800C5 2 6.200 1.200 8 1.200" fill="none" stroke="#3a434c" stroke-width="1.300"/><path d="M7.400 -.4 10.200 1.200 7.600 3Z" fill="#3a434c"/></svg>
<svg class="ic" style="left:797.8px;top:8.2px" width="14" height="12" viewBox="0 0 14 12"><path d="M.6 3.800H12.500L8.300 .4M12.700 7.500H.8L5 11.200" fill="none" stroke="#414851" stroke-width="1.300"/></svg>
<span class="aib" style="left:827.5px">AI</span>
</div>
<!-- v scrollbar -->
<div class="abs" style="left:896px;top:29px;width:17px;height:393px;background:#f0f0f0"></div>
<div class="abs" style="left:896px;top:46.500px;width:17px;height:179px;background:#cdcdcd"></div>
<svg class="abs" style="left:900px;top:35px" width="9" height="6" viewBox="0 0 9 6"><path d="M.6 5 4.500 1.100 8.400 5" fill="none" stroke="#8f8f8f" stroke-width="1.100"/></svg>
<svg class="abs" style="left:900px;top:411px" width="9" height="6" viewBox="0 0 9 6"><path d="M.6 1 4.500 4.900 8.400 1" fill="none" stroke="#8f8f8f" stroke-width="1.100"/></svg>
<!-- h scrollbar -->
<div class="abs" style="left:0;top:422px;width:896px;height:17px;background:#f0f0f0"></div>
<div class="abs" style="left:292.500px;top:422px;width:585px;height:17px;background:#cdcdcd"></div>
<svg class="abs" style="left:5px;top:426px" width="6" height="9" viewBox="0 0 6 9"><path d="M5 .6 1.100 4.500 5 8.400" fill="none" stroke="#8f8f8f" stroke-width="1.100"/></svg>
<svg class="abs" style="left:884.500px;top:426px" width="6" height="9" viewBox="0 0 6 9"><path d="M1 .6 4.900 4.500 1 8.400" fill="none" stroke="#8f8f8f" stroke-width="1.100"/></svg>
</div>

<!-- pager -->
<svg class="abs" style="left:151px;top:699px" width="15" height="15" viewBox="0 0 15 15"><path d="M14.500 .5V14.500L.5 7.500Z" fill="#414e5a"/></svg>
<div class="abs" style="left:172px;top:699px;font-size:13.400px;line-height:17px;color:#444">1/1</div>
<svg class="abs" style="left:201px;top:699px" width="15" height="15" viewBox="0 0 15 15"><path d="M.5 .5V14.500L14.500 7.500Z" fill="#414e5a"/></svg>
<div class="lb" style="left:237px;top:699.500px">分页大小</div>
<div class="inp" style="left:295px;top:697px;width:50px;height:19.500px;border-color:#8c9095"><span style="position:absolute;left:3px;top:1px;font-size:12.500px;line-height:16px;color:#000">40</span></div>
<div class="lb" style="left:355px;top:699.500px">总数:</div>
<div class="lb" style="left:392px;top:699.500px;font-size:12.500px">28</div>
<!-- grip -->
<svg class="abs" style="left:1063px;top:718px" width="12" height="12" viewBox="0 0 12 12"><g fill="#b6bcc2"><rect x="9" y="1" width="1.500" height="1.500"/><rect x="6" y="4" width="1.500" height="1.500"/><rect x="9" y="4" width="1.500" height="1.500"/><rect x="3" y="7" width="1.500" height="1.500"/><rect x="6" y="7" width="1.500" height="1.500"/><rect x="9" y="7" width="1.500" height="1.500"/><rect x="0" y="10" width="1.500" height="1.500"/><rect x="3" y="10" width="1.500" height="1.500"/><rect x="6" y="10" width="1.500" height="1.500"/><rect x="9" y="10" width="1.500" height="1.500"/></g></svg>
<div id="bottom"></div>
<div class="abs" style="left:3px;top:731.800px;width:556px;height:1.200px;background:repeating-linear-gradient(90deg,#333 0,#333 7px,#fff 7px,#fff 9px,#555 9px,#555 12px,#fff 12px,#fff 15px)"></div>

<!-- red annotations -->
<svg class="abs" style="left:0;top:0;pointer-events:none" width="1076" height="733" viewBox="0 0 1076 733">
<rect x="160" y="71.200" width="896.400" height="158.800" fill="none" stroke="#e7383b" stroke-width="3"/>
<path d="M658.400 153.300 676.800 152.200 676.200 154.800 773.300 198.500 672.300 162.600 670.600 165.400Z" fill="#f43b38"/>
<path d="M235.300 369.300 118.400 442.300 115.900 441.200 106.100 455.700 124.800 452.600 122.900 449.500Z" fill="#f43b38"/>
<text x="790.500" y="205.600" font-family="Liberation Sans,sans-serif" font-size="29.500" fill="#e7383b" stroke="#e7383b" stroke-width=".2">7</text>
<text x="251.500" y="362.400" font-family="Liberation Serif,serif" font-size="31" fill="#e7383b" stroke="#e7383b" stroke-width=".7">6</text>
</svg>
</body>
</html>
